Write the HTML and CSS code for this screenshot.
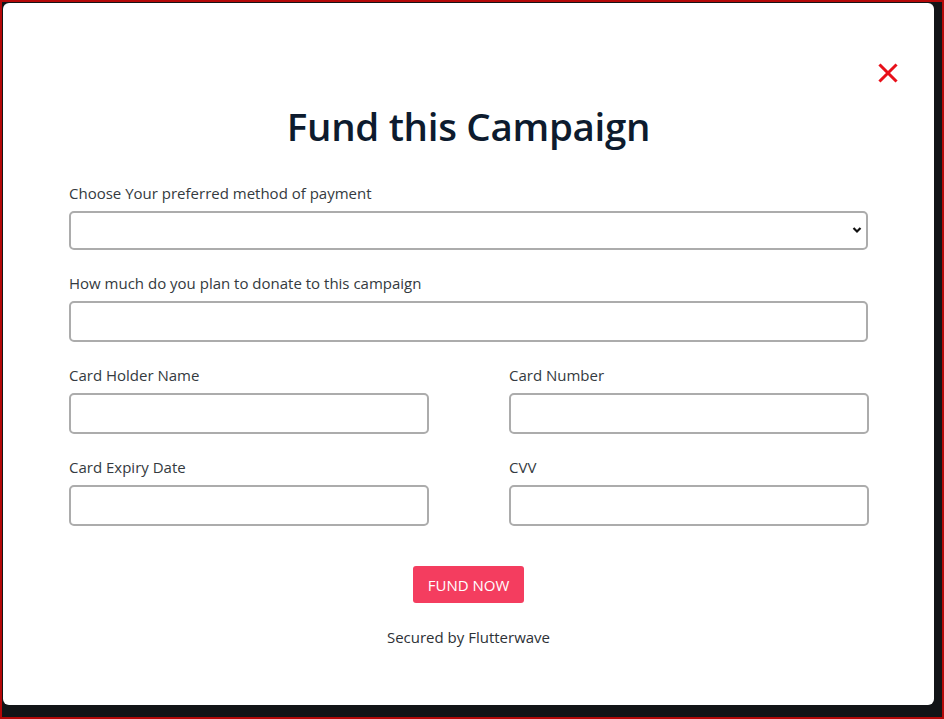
FILE: index.html
```html
<!DOCTYPE html>
<html lang="en">
<head>
<meta charset="utf-8">
<title>Fund this Campaign</title>
<link rel="stylesheet" href="styles.css">
</head>
<body>
<div class="frame">
  <div class="modal">
    <div class="close-row">
      <button class="close" aria-label="Close">
        <svg width="20" height="20" viewBox="0 0 20 20"><path d="M2.5 2.5 L17.5 17.5 M17.5 2.5 L2.5 17.5" stroke="#e8101a" stroke-width="3" stroke-linecap="square"/></svg>
      </button>
    </div>
    <h1 class="title">Fund this Campaign</h1>
    <form class="form">
      <div class="field">
        <label class="label">Choose Your preferred method of payment</label>
        <div class="select-wrap">
          <select class="control select"><option></option></select>
          <svg class="chev" width="10" height="8" viewBox="0 0 10 8"><path d="M1.5 2 L5 5.5 L8.5 2" stroke="#111" stroke-width="2.2" fill="none"/></svg>
        </div>
      </div>
      <div class="field">
        <label class="label">How much do you plan to donate to this campaign</label>
        <input class="control" type="text">
      </div>
      <div class="pair">
        <div class="field">
          <label class="label">Card Holder Name</label>
          <input class="control" type="text">
        </div>
        <div class="field">
          <label class="label">Card Number</label>
          <input class="control" type="text">
        </div>
      </div>
      <div class="pair">
        <div class="field">
          <label class="label">Card Expiry Date</label>
          <input class="control" type="text">
        </div>
        <div class="field">
          <label class="label">CVV</label>
          <input class="control" type="text">
        </div>
      </div>
      <div class="actions">
        <button type="button" class="fund">FUND NOW</button>
        <p class="secured">Secured by Flutterwave</p>
      </div>
    </form>
  </div>
</div>
</body>
</html>
```

FILE: styles.css
```css
* { box-sizing: border-box; }
html, body { margin: 0; padding: 0; }
body {
  width: 944px;
  height: 719px;
  overflow: hidden;
  font-family: "Open Sans", "Noto Sans", sans-serif;
  background: #131518;
}
.frame {
  width: 944px;
  height: 719px;
  border: 2px solid #b40808;
  background: #121417;
  padding: 1px 8px 12px 1px;
}
.modal {
  width: 931px;
  height: 702px;
  background: #fff;
  border-radius: 6px;
  padding: 0 66px;
  display: flex;
  flex-direction: column;
}
.close-row {
  display: flex;
  justify-content: flex-end;
  padding-top: 60px;
  margin-right: -30px;
  height: 80px;
}
.close {
  border: 0;
  background: none;
  padding: 0;
  width: 20px;
  height: 20px;
  cursor: pointer;
}
.title {
  margin: 19px 0 0;
  text-align: center;
  font-size: 38.5px;
  line-height: 48px;
  font-weight: 600;
  color: #0d1b2e;
  letter-spacing: -0.3px;
}
.form {
  margin-top: 32px;
  display: flex;
  flex-direction: column;
  gap: 22px;
}
.pair {
  display: grid;
  grid-template-columns: 360px 360px;
  column-gap: 80px;
}
.field {
  display: flex;
  flex-direction: column;
}
.label {
  font-size: 15px;
  line-height: 22px;
  color: #343a40;
  margin-bottom: 7px;
}
.control {
  width: 100%;
  height: 41px;
  border: 2px solid #acacac;
  border-radius: 5px;
  background: #fff;
  font: inherit;
  padding: 0 10px;
  outline: none;
}
.select-wrap { position: relative; }
.select {
  appearance: none;
  -webkit-appearance: none;
  height: 39px;
}
.chev {
  position: absolute;
  right: 6px;
  top: 15px;
  pointer-events: none;
}
.actions {
  display: flex;
  flex-direction: column;
  align-items: center;
  margin-top: 18px;
}
.fund {
  width: 111px;
  height: 37px;
  border: 0;
  border-radius: 3px;
  background: #f43d5f;
  color: #fff;
  font: inherit;
  font-size: 15px;
  padding: 0;
}
.secured {
  margin: 23px 0 0;
  font-size: 15px;
  line-height: 22px;
  color: #2d3136;
}
```
